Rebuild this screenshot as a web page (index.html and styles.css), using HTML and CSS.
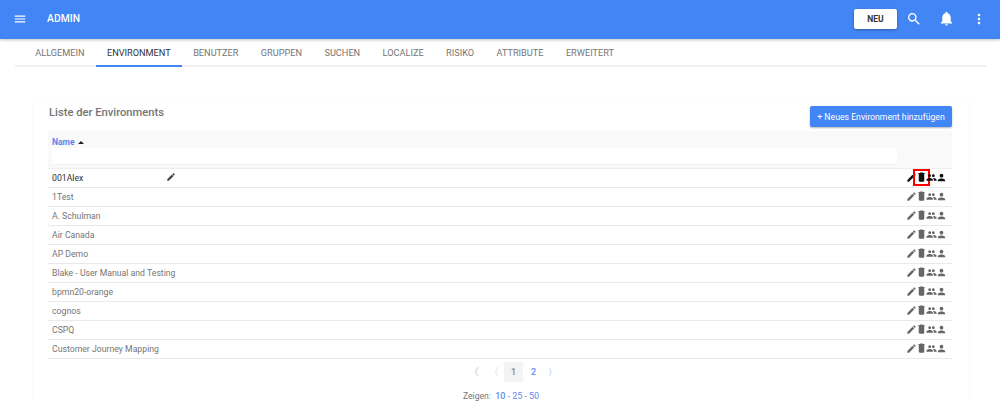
FILE: index.html
```html
<!DOCTYPE html>
<html lang="de">
<head>
<meta charset="utf-8">
<title>Admin</title>
<link rel="stylesheet" href="styles.css">
</head>
<body>
<svg class="defs" width="0" height="0" aria-hidden="true">
  <symbol id="i-pen" viewBox="0 0 24 24"><path d="M3 17.25V21h3.75L17.81 9.94l-3.75-3.75L3 17.25zM20.71 7.04a1 1 0 0 0 0-1.41l-2.34-2.34a1 1 0 0 0-1.41 0l-1.83 1.83 3.75 3.75 1.83-1.83z"/></symbol>
  <symbol id="i-trash" viewBox="0 0 24 24"><path d="M6 19c0 1.1.9 2 2 2h8c1.1 0 2-.9 2-2V4H6v15zM19 2h-3.5l-1-1h-5l-1 1H5v2h14V2z"/></symbol>
  <symbol id="i-group" viewBox="0 0 24 24"><path d="M16 11c1.66 0 2.99-1.34 2.99-3S17.66 5 16 5s-3 1.34-3 3 1.34 3 3 3zm-8 0c1.66 0 2.99-1.34 2.99-3S9.66 5 8 5 5 6.34 5 8s1.34 3 3 3zm0 2c-2.33 0-7 1.17-7 3.5V19h14v-2.5C15 14.17 10.33 13 8 13zm8 0c-.29 0-.62.02-.97.05 1.16.84 1.97 1.97 1.97 3.45V19h6v-2.5c0-2.33-4.67-3.5-7-3.5z"/></symbol>
  <symbol id="i-person" viewBox="0 0 24 24"><path d="M12 12c2.21 0 4-1.79 4-4s-1.79-4-4-4-4 1.79-4 4 1.79 4 4 4zm0 2c-2.67 0-8 1.34-8 4v2h16v-2c0-2.66-5.33-4-8-4z"/></symbol>
</svg>

<header class="topbar">
  <svg class="menu-icon" viewBox="0 0 24 24"><path d="M3 18h18v-2H3v2zm0-5h18v-2H3v2zm0-7v2h18V6H3z"/></svg>
  <span class="app-title">ADMIN</span>
  <button class="new-btn">NEU</button>
  <svg class="top-icon search" viewBox="0 0 24 24"><path d="M15.5 14h-.79l-.28-.27A6.47 6.47 0 0 0 16 9.5 6.5 6.5 0 1 0 9.5 16c1.61 0 3.09-.59 4.23-1.57l.27.28v.79l5 4.99L20.49 19l-4.99-5zm-6 0C7.01 14 5 11.99 5 9.5S7.01 5 9.5 5 14 7.01 14 9.5 11.99 14 9.5 14z"/></svg>
  <svg class="top-icon bell" viewBox="0 0 24 24"><path d="M12 22c1.1 0 2-.9 2-2h-4c0 1.1.9 2 2 2zm6-6v-5c0-3.07-1.63-5.64-4.5-6.32V4c0-.83-.67-1.5-1.5-1.5s-1.5.67-1.5 1.5v.68C7.64 5.36 6 7.92 6 11v5l-2 2v1h16v-1l-2-2z"/></svg>
  <svg class="top-icon dots" viewBox="0 0 24 24"><path d="M12 8c1.1 0 2-.9 2-2s-.9-2-2-2-2 .9-2 2 .9 2 2 2zm0 2c-1.1 0-2 .9-2 2s.9 2 2 2 2-.9 2-2-.9-2-2-2zm0 6c-1.1 0-2 .9-2 2s.9 2 2 2 2-.9 2-2-.9-2-2-2z"/></svg>
</header>

<nav class="tabs">
  <a class="tab">ALLGEMEIN</a>
  <a class="tab active">ENVIRONMENT</a>
  <a class="tab">BENUTZER</a>
  <a class="tab">GRUPPEN</a>
  <a class="tab">SUCHEN</a>
  <a class="tab">LOCALIZE</a>
  <a class="tab">RISIKO</a>
  <a class="tab">ATTRIBUTE</a>
  <a class="tab">ERWEITERT</a>
</nav>

<main class="card">
  <div class="card-head">
    <h1 class="card-title">Liste der Environments</h1>
    <button class="add-btn">+ Neues Environment hinzufügen</button>
  </div>

  <div class="thead">
    <div class="th-name">Name <span class="sort"></span></div>
    <div class="filter"></div>
  </div>

  <div class="row first">
    <span class="cell-name">001Alex</span>
    <svg class="inline-pen"><use href="#i-pen"/></svg>
    <span class="actions">
      <svg class="ic"><use href="#i-pen"/></svg>
      <span class="hl"><svg class="ic"><use href="#i-trash"/></svg></span>
      <svg class="ic"><use href="#i-group"/></svg>
      <svg class="ic"><use href="#i-person"/></svg>
    </span>
  </div>
  <div class="row"><span class="cell-name">1Test</span><span class="actions"><svg class="ic"><use href="#i-pen"/></svg><svg class="ic"><use href="#i-trash"/></svg><svg class="ic"><use href="#i-group"/></svg><svg class="ic"><use href="#i-person"/></svg></span></div>
  <div class="row"><span class="cell-name">A. Schulman</span><span class="actions"><svg class="ic"><use href="#i-pen"/></svg><svg class="ic"><use href="#i-trash"/></svg><svg class="ic"><use href="#i-group"/></svg><svg class="ic"><use href="#i-person"/></svg></span></div>
  <div class="row"><span class="cell-name">Air Canada</span><span class="actions"><svg class="ic"><use href="#i-pen"/></svg><svg class="ic"><use href="#i-trash"/></svg><svg class="ic"><use href="#i-group"/></svg><svg class="ic"><use href="#i-person"/></svg></span></div>
  <div class="row"><span class="cell-name">AP Demo</span><span class="actions"><svg class="ic"><use href="#i-pen"/></svg><svg class="ic"><use href="#i-trash"/></svg><svg class="ic"><use href="#i-group"/></svg><svg class="ic"><use href="#i-person"/></svg></span></div>
  <div class="row"><span class="cell-name">Blake - User Manual and Testing</span><span class="actions"><svg class="ic"><use href="#i-pen"/></svg><svg class="ic"><use href="#i-trash"/></svg><svg class="ic"><use href="#i-group"/></svg><svg class="ic"><use href="#i-person"/></svg></span></div>
  <div class="row"><span class="cell-name">bpmn20-orange</span><span class="actions"><svg class="ic"><use href="#i-pen"/></svg><svg class="ic"><use href="#i-trash"/></svg><svg class="ic"><use href="#i-group"/></svg><svg class="ic"><use href="#i-person"/></svg></span></div>
  <div class="row"><span class="cell-name">cognos</span><span class="actions"><svg class="ic"><use href="#i-pen"/></svg><svg class="ic"><use href="#i-trash"/></svg><svg class="ic"><use href="#i-group"/></svg><svg class="ic"><use href="#i-person"/></svg></span></div>
  <div class="row"><span class="cell-name">CSPQ</span><span class="actions"><svg class="ic"><use href="#i-pen"/></svg><svg class="ic"><use href="#i-trash"/></svg><svg class="ic"><use href="#i-group"/></svg><svg class="ic"><use href="#i-person"/></svg></span></div>
  <div class="row"><span class="cell-name">Customer Journey Mapping</span><span class="actions"><svg class="ic"><use href="#i-pen"/></svg><svg class="ic"><use href="#i-trash"/></svg><svg class="ic"><use href="#i-group"/></svg><svg class="ic"><use href="#i-person"/></svg></span></div>

  <div class="pager">
    <span class="pg muted back">《</span>
    <span class="pg muted back">〈</span>
    <span class="pg current">1</span>
    <span class="pg link two">2</span>
    <span class="pg link">〉</span>
  </div>
  <div class="show">Zeigen: &nbsp;<b class="link">10</b> <span class="link">-</span> <span class="link">25</span> - <span class="link">50</span></div>
</main>
</body>
</html>
```

FILE: styles.css
```css
* { box-sizing: border-box; }
html, body { margin: 0; height: 402px; overflow: hidden; }
body { background: #fff; font-family: Roboto, "Liberation Sans", sans-serif; color: #757575; font-size: 9px; }
.defs { position: absolute; }

.topbar { height: 39px; background: #4285f4; box-shadow: 0 1px 3px rgba(0,0,0,.25); display: flex; align-items: center; padding: 0 13px 2px; position: relative; }
.menu-icon { width: 14px; height: 14px; fill: #fff; }
.app-title { margin-left: 20px; color: #fff; font-size: 10.3px; font-weight: 500; flex: 1; letter-spacing: .1px; }
.new-btn { width: 43px; height: 20px; background: #fff; border: 0; border-radius: 2px; box-shadow: 0 1px 3px rgba(0,0,0,.3); font: 700 8.5px Roboto, sans-serif; color: #333; padding: 0; margin-right: 9px; }
.top-icon { fill: #fff; }
.search { width: 16px; height: 16px; margin-right: 16px; }
.bell { width: 17px; height: 17px; margin-right: 16px; }
.dots { width: 16px; height: 16px; }

.tabs { height: 28px; margin: 0 14px 0 15px; border-bottom: 2px solid #f1f1f1; display: flex; padding-left: 9px; }
.tab { height: 28px; padding: 0 11.2px; line-height: 28px; font-size: 9.2px; color: #757575; white-space: nowrap; }
.active { color: #333; border-bottom: 2px solid #4285f4; }

.card { margin: 33px 30px 0 32px; height: 320px; border: 1px solid #fbfbfb; border-bottom: 0; border-top-color: #fdfdfd; padding: 0 17px 0 15px; }
.card-head { height: 30px; display: flex; justify-content: space-between; align-items: flex-start; }
.card-title { margin: 5px 0 0 1px; font-size: 11.2px; font-weight: 500; color: #757575; }
.add-btn { margin-top: 5px; width: 142px; height: 21px; background: #4285f4; color: #fff; border: 0; border-radius: 2px; box-shadow: 0 1px 2px rgba(0,0,0,.3); font: 400 8.7px Roboto, sans-serif; padding: 0; }

.thead { height: 37px; background: #f9f9f9; padding: 6px 0 0 4px; }
.th-name { color: #5c85f0; font-size: 8.5px; font-weight: 700; height: 11px; line-height: 10px; }
.sort { display: inline-block; width: 0; height: 0; border: 3px solid transparent; border-bottom: 3px solid #222; border-top: 0; margin-left: 1px; vertical-align: 1px; }
.filter { width: 845px; height: 17px; background: #fff; border-bottom: 1px solid #f1f1f1; }

.row { height: 19px; border-bottom: 1px solid #e9e9e9; display: flex; align-items: center; padding-left: 4px; position: relative; }
.first { height: 20px; border-top: 1px solid #eee; color: #333; }
.first .ic { fill: #111; }
.cell-name { font-size: 8.7px; }
.inline-pen { position: absolute; left: 118px; top: 3px; width: 10px; height: 10px; fill: #444; }
.actions { margin-left: auto; margin-right: 5px; margin-top: -1px; display: flex; align-items: center; gap: 0; }
.ic { width: 11px; height: 11px; fill: #666; display: block; margin-left: -1px; }
.hl { outline: 2px solid #f00; outline-offset: 1px; display: block; width: 11px; height: 11px; margin-left: -1px; }
.hl .ic { margin-left: 0; }

.pager { display: flex; justify-content: center; align-items: center; height: 20px; margin-top: 3px; font-size: 10px; padding-left: 26px; }
.pg { width: 19px; height: 20px; line-height: 20px; text-align: center; font-weight: 500; }
.back { margin-right: 1px; }
.two { margin-left: 1px; }
.muted { color: #bbb; }
.current { background: #f3f3f3; color: #888; font-size: 9px; }
.link { color: #5c8df0; font-size: 9px; }
.show { text-align: center; margin-top: 9px; padding-left: 2px; font-size: 8.6px; color: #757575; }
.show b { font-weight: 500; }
```
